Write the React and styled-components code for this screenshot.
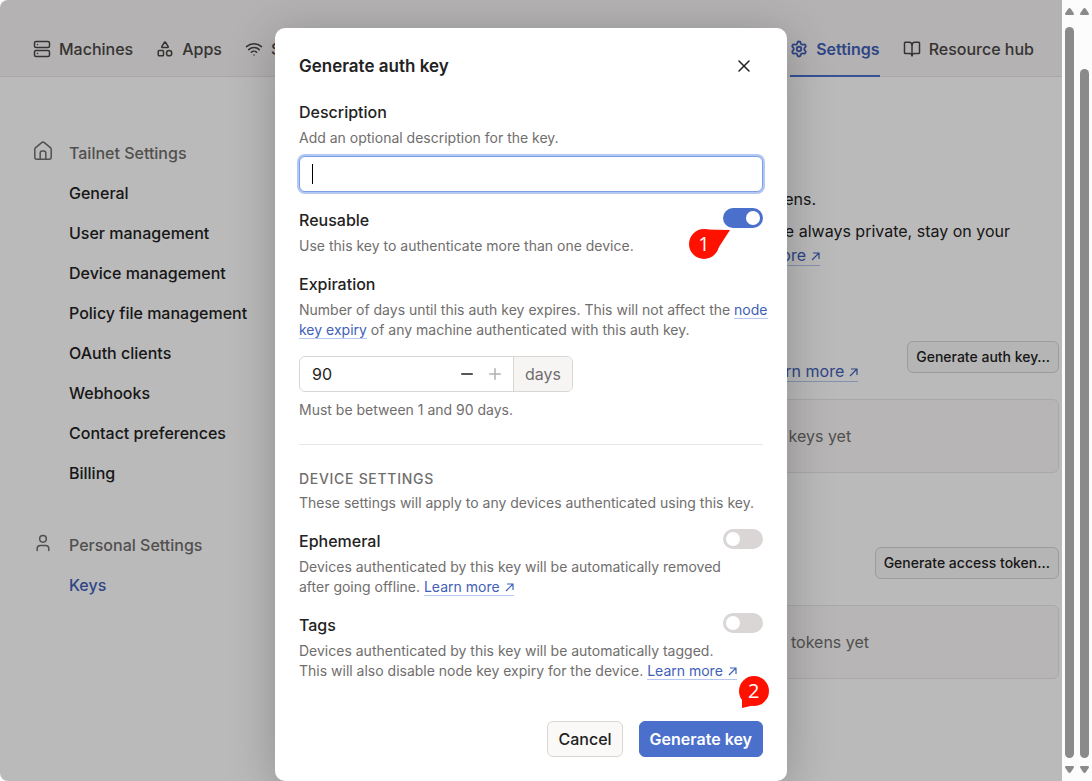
import React from "react";
import styled, { createGlobalStyle } from "styled-components";
import { Server, Shapes, Wifi, Settings, BookOpen, User, X, Minus, Plus } from "lucide-react";

const color = {
  text: "#232222",
  muted: "#706e6d",
  link: "#4160b8",
  primary: "#4b70cc",
  line: "#d9d6d5",
  soft: "#f7f5f4",
};

const GlobalStyle = createGlobalStyle`
  *, *::before, *::after { box-sizing: border-box; }
  body {
    margin: 0;
    background: #fff;
    color: ${color.text};
    font: 16px/24px Inter, "Liberation Sans", sans-serif;
  }
  h1, h2, h3, p, ul { margin: 0; padding: 0; font-size: inherit; font-weight: inherit; }
  ul { list-style: none; }
  button, input { font: inherit; color: inherit; }
`;

const Window = styled.div`
  display: flex;
  min-height: 100vh;
  background: #fcfcfc;
`;

const Stage = styled.div`
  flex: 1;
  min-width: 0;
  display: grid;
  grid-template-columns: minmax(0, 1fr);
  overflow: hidden;
  border-radius: 8px 0 0 8px;
`;

const Page = styled.div`
  grid-area: 1 / 1;
  background: #fff;
`;

const Backdrop = styled.div`
  grid-area: 1 / 1;
  z-index: 1;
  display: flex;
  flex-direction: column;
  align-items: center;
  padding-top: 28px;
  background: rgba(0, 0, 0, 0.27);
`;

/* Page behind the dialog */

const Header = styled.header`
  display: flex;
  height: 77px;
  padding: 22px 28px 0 33px;
  background: ${color.soft};
  border-bottom: 1px solid #eae7e5;
`;

const NavGroup = styled.nav`
  display: flex;
  gap: 23px;
  & + & { margin-left: auto; }
`;

const NavLink = styled.a`
  display: flex;
  gap: 8px;
  align-items: center;
  height: 55px;
  border-bottom: 2px solid ${(p) => (p.$active ? color.primary : "transparent")};
  color: ${(p) => (p.$active ? color.link : "#4a4746")};
  font-weight: ${(p) => (p.$active ? 600 : 500)};
  text-decoration: none;
`;

const Body = styled.div`
  display: flex;
  padding: 0 3px 24px 33px;
`;

const Sidebar = styled.nav`
  display: flex;
  flex-direction: column;
  gap: 32px;
  flex: none;
  width: 240px;
  padding-top: 56px;
`;

const SideHeading = styled.h2`
  display: flex;
  align-items: center;
  gap: 16px;
  height: 40px;
  color: ${color.muted};
  font-weight: 500;
  svg { margin: 0 0 4px; }
`;

const SideLink = styled.a`
  display: block;
  padding-left: 36px;
  line-height: 40px;
  font-weight: 500;
  text-decoration: none;
  color: ${(p) => (p.$active ? color.link : color.text)};
`;

const Main = styled.main`
  flex: 0 1 516px;
  margin-left: auto;
  padding-top: 110px;
`;

const Line = styled.p`
  padding-right: ${(p) => p.$inset}px;
  margin-top: ${(p) => (p.$spaced ? 8 : 0)}px;
  text-align: right;
`;

const Section = styled.section`
  margin-top: 74px;
`;

const SectionHead = styled.div`
  display: flex;
  justify-content: flex-end;
  align-items: flex-start;
  gap: 49px;
  height: 42px;
`;

const SectionNote = styled.p`
  align-self: flex-end;
`;

const Empty = styled.p`
  display: flex;
  align-items: center;
  justify-content: center;
  height: 74px;
  margin-top: 16px;
  border: 1px solid #eae7e5;
  border-radius: 6px;
  background: #fbf9f8;
  color: ${color.muted};
`;

/* Shared controls */

const Link = styled.a`
  color: ${color.link};
  text-decoration: none;
  border-bottom: 1px solid #b7c9f0;
  white-space: nowrap;
`;

const Arrow = styled.svg`
  width: 9px;
  height: 9px;
  margin-left: 5px;
`;

const Button = styled.button`
  height: ${(p) => (p.$small ? 32 : 36)}px;
  padding: 0 ${(p) => (p.$small ? 8 : 10)}px;
  border: 1px solid ${(p) => (p.$primary ? color.primary : color.line)};
  border-radius: 6px;
  background: ${(p) => (p.$primary ? color.primary : "#faf9f8")};
  color: ${(p) => (p.$primary ? "#fff" : color.text)};
  font-size: ${(p) => (p.$small ? 14 : 16)}px;
  font-weight: ${(p) => (p.$primary ? 600 : 500)};
  white-space: nowrap;
`;

/* Dialog */

const Dialog = styled.form`
  width: 512px;
  max-width: 100%;
  padding: 24px;
  border-radius: 10px;
  background: #fff;
  box-shadow: 0 8px 48px rgba(0, 0, 0, 0.24);
`;

const DialogHead = styled.div`
  display: flex;
  align-items: center;
  justify-content: space-between;
  height: 28px;
  margin-bottom: 20px;
`;

const DialogTitle = styled.h1`
  font-size: 17px;
  font-weight: 600;
`;

const IconButton = styled.button`
  display: flex;
  align-items: center;
  justify-content: center;
  width: ${(p) => p.$size}px;
  height: ${(p) => p.$size}px;
  padding: 0;
  border: 0;
  background: none;
  color: ${(p) => (p.disabled ? "#b3b0ae" : color.text)};
`;

const CloseButton = styled(IconButton)`
  margin-right: 5px;
`;

const Fields = styled.div`
  display: flex;
  flex-direction: column;
  gap: 16px;
`;

const SwitchRow = styled.div`
  display: flex;
  align-items: flex-start;
  justify-content: space-between;
`;

const Label = styled.label`
  display: block;
  margin-bottom: 4px;
  font-weight: 500;
`;

const Hint = styled.p`
  color: ${color.muted};
  font-size: 14px;
  line-height: 20px;
  white-space: nowrap;
`;

const DescriptionBox = styled.div`
  position: relative;
  margin-top: 8px;
`;

const TextInput = styled.input`
  display: block;
  width: 100%;
  height: 36px;
  padding: 0 12px;
  border: 1px solid #7b9fe6;
  border-radius: 6px;
  outline: 0;
  box-shadow: 0 0 0 2px #b3c8f2;
  caret-color: transparent;
`;

const Caret = styled.span`
  position: absolute;
  left: 13px;
  top: 8px;
  width: 1px;
  height: 20px;
  background: #000;
`;

const ToggleBox = styled.div`
  position: relative;
  flex: none;
`;

const Toggle = styled.input.attrs({ type: "checkbox", role: "switch" })`
  appearance: none;
  display: block;
  width: 40px;
  height: 20px;
  margin: 0;
  padding: 3px;
  border-radius: 10px;
  background: ${color.line};
  &::before {
    content: "";
    display: block;
    width: 14px;
    height: 14px;
    border-radius: 50%;
    background: #fff;
  }
  &:checked { background: ${color.primary}; }
  &:checked::before { margin-left: auto; }
`;

const Stepper = styled.div`
  display: flex;
  width: 274px;
  height: 36px;
  margin: 16px 0 8px;
  border: 1px solid ${color.line};
  border-radius: 6px;
  overflow: hidden;
`;

const StepperInput = styled.input`
  flex: 1;
  min-width: 0;
  padding: 0 12px;
  border: 0;
  outline: 0;
  background: none;
`;

const StepperButtons = styled.div`
  display: flex;
  align-items: center;
  padding-right: 4px;
`;

const Unit = styled.span`
  display: flex;
  align-items: center;
  padding: 0 11px;
  border-left: 1px solid ${color.line};
  background: ${color.soft};
  color: ${color.muted};
`;

const Divider = styled.hr`
  height: 1px;
  margin: 24px 0;
  border: 0;
  background: #eae8e6;
`;

const GroupTitle = styled.h2`
  margin-bottom: 4px;
  color: ${color.muted};
  font-size: 14px;
  font-weight: 500;
  line-height: 20px;
  letter-spacing: 0.05em;
  text-transform: uppercase;
`;

const GroupIntro = styled(Hint)`
  margin-bottom: 16px;
`;

const Footer = styled.div`
  display: flex;
  justify-content: flex-end;
  gap: 16px;
  margin-top: 40px;
`;

const SubmitBox = styled.div`
  position: relative;
`;

/* Numbered callouts pinned over the dialog */

const Callout = styled.div`
  position: absolute;
  left: ${(p) => p.$left}px;
  top: ${(p) => p.$top}px;
  width: 30px;
  height: 30px;
  color: #fff;
  font: 20px/30px "Open Sans", "Noto Sans", sans-serif;
  text-align: center;
  svg { position: absolute; left: 0; top: 0; overflow: visible; }
  span { position: relative; }
`;

/* Scroll bars */

const Bars = styled.div`
  display: flex;
  flex: none;
  gap: 6px;
  padding: 8px 3px;
`;

const Bar = styled.div`
  display: flex;
  flex-direction: column;
  width: 9px;
  svg { display: block; flex: none; }
`;

const Thumb = styled.div`
  flex: 1;
  margin: ${(p) => p.$offset}px 0 8px;
  border-radius: 5px;
  background: #8a8a8a;
`;

const OutArrow = () => (
  <Arrow viewBox="0 0 9 9" fill="none" stroke="currentColor" strokeWidth="1.2" aria-hidden="true">
    <path d="M1 8 8 1M2 1H8v6" />
  </Arrow>
);

const HomeIcon = () => (
  <svg width="20" height="20" viewBox="0 0 20 20" fill="none" stroke="currentColor" strokeWidth="1.5" strokeLinejoin="round" aria-hidden="true">
    <path d="M1.800 8.400c0-.7.3-1.3.8-1.7l6.100-5.100a2 2 0 0 1 2.600 0l6.100 5.100c.5.4.8 1 .8 1.7v7.800a2 2 0 0 1-2 2H3.800a2 2 0 0 1-2-2z" />
    <path d="M7.200 18v-6a2 2 0 0 1 2-2h1.600a2 2 0 0 1 2 2v6" />
  </svg>
);

const ScrollBar = ({ offset }) => (
  <Bar aria-hidden="true">
    <svg width="9" height="7" viewBox="0 0 9 7"><path d="M3.200 .8Q4.500-.6 5.800 .8L8.800 5.200Q9.300 7 8 7H1Q-.3 7 .2 5.200Z" fill="#8a8a8a" /></svg>
    <Thumb $offset={offset} />
    <svg width="9" height="7" viewBox="0 0 9 7"><path d="M3.200 6.200Q4.500 7.600 5.800 6.200L8.800 1.800Q9.300 0 8 0H1Q-.3 0 .2 1.800Z" fill="#8a8a8a" /></svg>
  </Bar>
);

const tailnetLinks = [
  "General", "User management", "Device management", "Policy file management",
  "OAuth clients", "Webhooks", "Contact preferences", "Billing",
];

const NavItem = ({ icon: Icon, active, children }) => (
  <NavLink href="#" $active={active}>
    <Icon size={18} strokeWidth={active ? 2.4 : 2} />
    {children}
  </NavLink>
);

const SwitchField = ({ id, label, checked, callout, children }) => (
  <div>
    <SwitchRow>
      <Label htmlFor={id}>{label}</Label>
      <ToggleBox>
        <Toggle id={id} defaultChecked={checked} />
        {callout}
      </ToggleBox>
    </SwitchRow>
    <Hint>{children}</Hint>
  </div>
);

export default function App() {
  return (
    <Window>
      <GlobalStyle />
      <Stage>
        <Page>
          <Header>
            <NavGroup>
              <NavItem icon={Server}>Machines</NavItem>
              <NavItem icon={Shapes}>Apps</NavItem>
              <NavItem icon={Wifi}>Services</NavItem>
            </NavGroup>
            <NavGroup>
              <NavItem icon={Settings} active>Settings</NavItem>
              <NavItem icon={BookOpen}>Resource hub</NavItem>
            </NavGroup>
          </Header>
          <Body>
            <Sidebar>
              <div>
                <SideHeading><HomeIcon />Tailnet Settings</SideHeading>
                <ul>
                  {tailnetLinks.map((name) => (
                    <li key={name}><SideLink href="#">{name}</SideLink></li>
                  ))}
                </ul>
              </div>
              <div>
                <SideHeading><User size={20} strokeWidth={1.8} />Personal Settings</SideHeading>
                <SideLink href="#" $active>Keys</SideLink>
              </div>
            </Sidebar>
            <Main>
              <Line $inset={243}>tokens.</Line>
              <Line $inset={49} $spaced>are always private, stay on your</Line>
              <Line $inset={239}><Link href="#">more<OutArrow /></Link></Line>
              <Section>
                <SectionHead>
                  <SectionNote><Link href="#">Learn more<OutArrow /></Link></SectionNote>
                  <Button type="button" $small>Generate auth key…</Button>
                </SectionHead>
                <Empty>auth keys yet</Empty>
              </Section>
              <Section>
                <SectionHead>
                  <Button type="button" $small>Generate access token…</Button>
                </SectionHead>
                <Empty>access tokens yet</Empty>
              </Section>
            </Main>
          </Body>
        </Page>

        <Backdrop>
          <Dialog role="dialog" aria-labelledby="dialog-title" onSubmit={(e) => e.preventDefault()}>
            <DialogHead>
              <DialogTitle id="dialog-title">Generate auth key</DialogTitle>
              <CloseButton type="button" $size={28} aria-label="Close"><X size={20} strokeWidth={1.8} /></CloseButton>
            </DialogHead>
            <Fields>
              <div>
                <Label htmlFor="description">Description</Label>
                <Hint>Add an optional description for the key.</Hint>
                <DescriptionBox>
                  <TextInput id="description" type="text" />
                  <Caret />
                </DescriptionBox>
              </div>
              <SwitchField
                id="reusable"
                label="Reusable"
                checked
                callout={
                  <Callout $left={-34} $top={21}>
                    <svg width="42" height="30" viewBox="0 0 42 30" aria-hidden="true">
                      <circle cx="15" cy="15" r="15" fill="#f10" />
                      <path d="M15 0.500 41 1 28 21z" fill="#f10" />
                    </svg>
                    <span>1</span>
                  </Callout>
                }
              >
                Use this key to authenticate more than one device.
              </SwitchField>
              <div>
                <Label htmlFor="expiration">Expiration</Label>
                <Hint>
                  Number of days until this auth key expires. This will not affect the <Link href="#">node</Link>
                  <br />
                  <Link href="#">key expiry</Link> of any machine authenticated with this auth key.
                </Hint>
                <Stepper>
                  <StepperInput id="expiration" type="text" inputMode="numeric" defaultValue="90" />
                  <StepperButtons>
                    <IconButton type="button" $size={28} aria-label="Decrease"><Minus size={18} /></IconButton>
                    <IconButton type="button" $size={28} aria-label="Increase" disabled><Plus size={18} /></IconButton>
                  </StepperButtons>
                  <Unit>days</Unit>
                </Stepper>
                <Hint>Must be between 1 and 90 days.</Hint>
              </div>
            </Fields>
            <Divider />
            <GroupTitle>Device settings</GroupTitle>
            <GroupIntro>These settings will apply to any devices authenticated using this key.</GroupIntro>
            <Fields>
              <SwitchField id="ephemeral" label="Ephemeral">
                Devices authenticated by this key will be automatically removed
                <br />
                after going offline. <Link href="#">Learn more<OutArrow /></Link>
              </SwitchField>
              <SwitchField id="tags" label="Tags">
                Devices authenticated by this key will be automatically tagged.
                <br />
                This will also disable node key expiry for the device. <Link href="#">Learn more<OutArrow /></Link>
              </SwitchField>
            </Fields>
            <Footer>
              <Button type="button">Cancel</Button>
              <SubmitBox>
                <Button type="submit" $primary>Generate key</Button>
                <Callout $left={100} $top={-45}>
                  <svg width="30" height="32" viewBox="0 0 30 32" aria-hidden="true">
                    <circle cx="15" cy="15" r="15" fill="#f10" />
                    <path d="M3 20V32L16 29z" fill="#f10" />
                  </svg>
                  <span>2</span>
                </Callout>
              </SubmitBox>
            </Footer>
          </Dialog>
        </Backdrop>
      </Stage>
      <Bars>
        <ScrollBar offset={12} />
        <ScrollBar offset={54} />
      </Bars>
    </Window>
  );
}
